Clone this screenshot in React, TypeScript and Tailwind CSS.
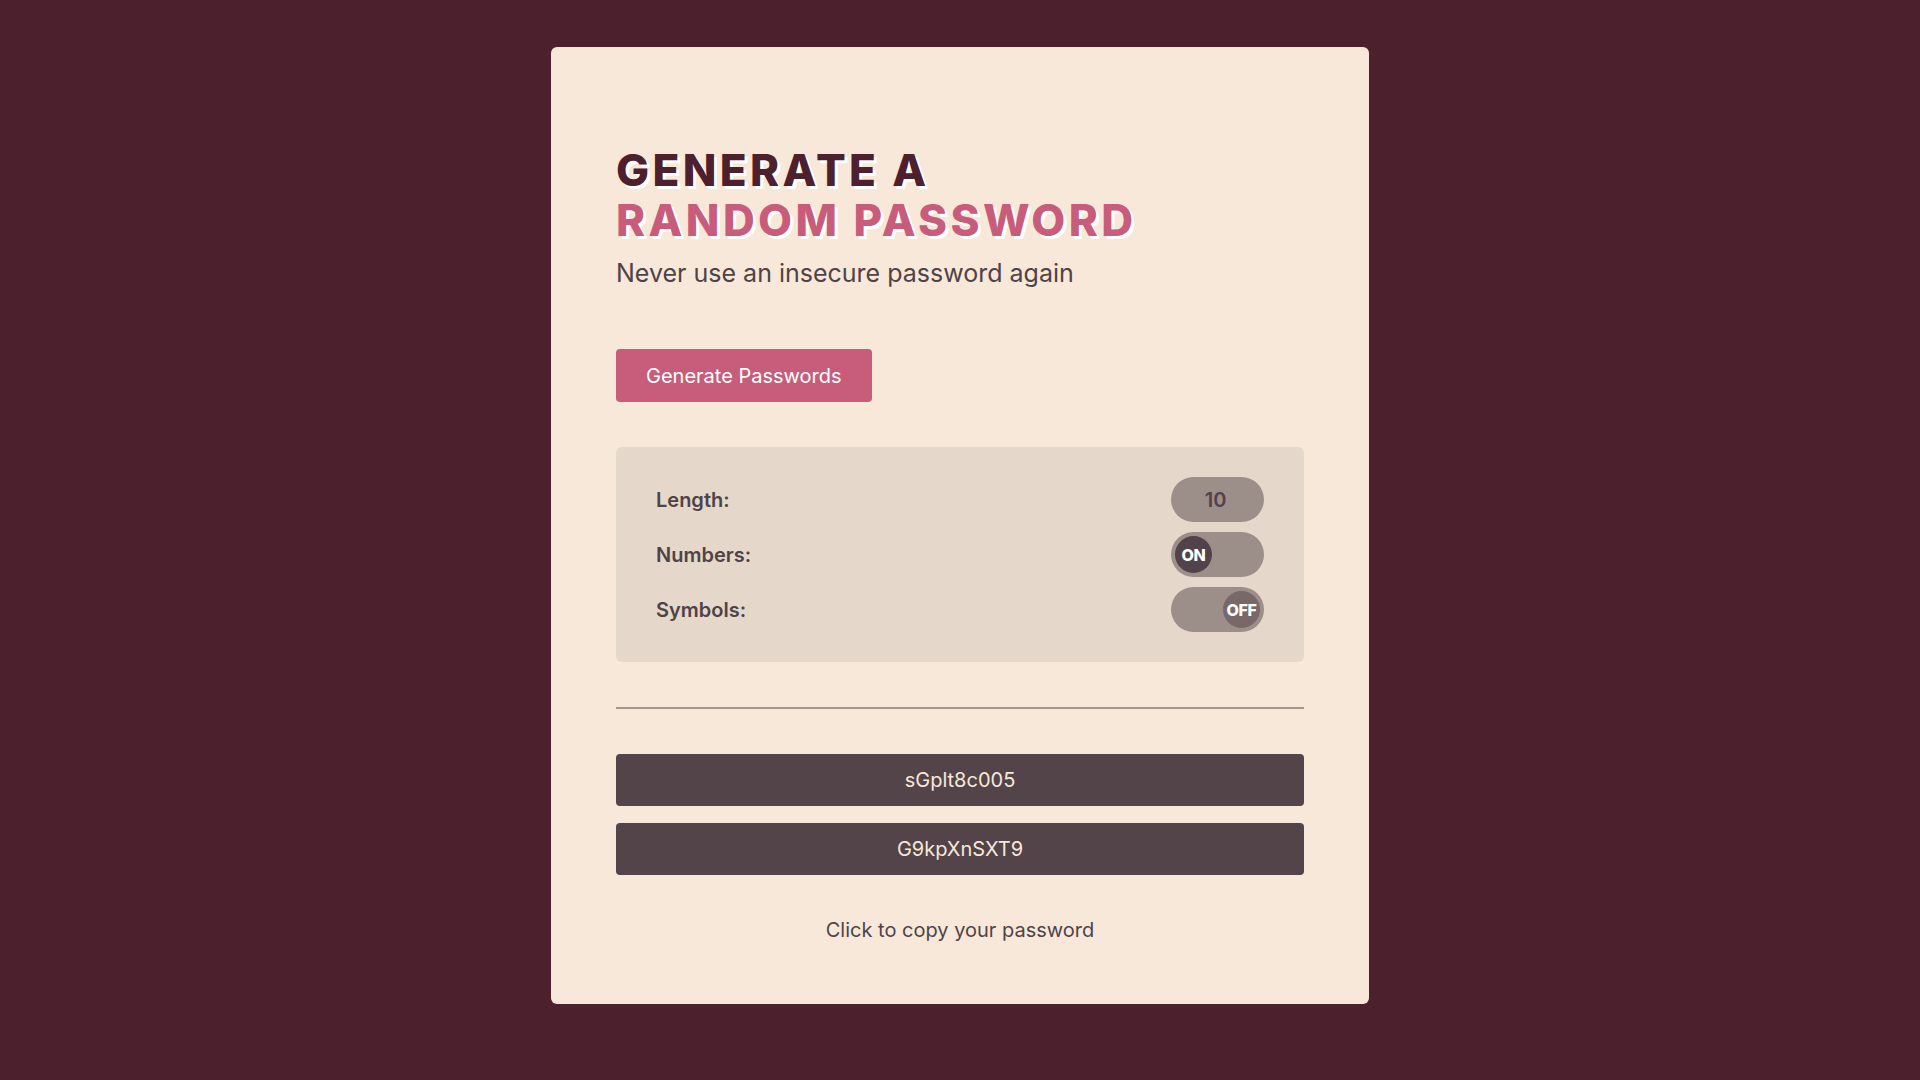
import { useState } from "react";

function Toggle({ on }: { on: boolean }) {
  return (
    <div
      className={`w-[93px] h-[45px] rounded-full bg-[#9c8e88] flex items-center px-[4px] ${
        on ? "justify-start" : "justify-end"
      }`}
    >
      <div
        className={`w-[37px] h-[37px] rounded-full flex items-center justify-center text-[16px] font-extrabold text-white tracking-tight ${
          on ? "bg-[#524249]" : "bg-[#786868]"
        }`}
      >
        {on ? "ON" : "OFF"}
      </div>
    </div>
  );
}

function App() {
  const [passwords] = useState(["sGplt8c005", "G9kpXnSXT9"]);
  return (
    <div className="min-h-screen bg-[#4d202e] font-['Inter',sans-serif] flex justify-center pt-[47px]">
      <div className="w-[818px] h-[957px] bg-[#f8e8da] rounded-[6px] px-[65px] pt-[98px] text-[#4f4347]">
        <h1 className="text-[44px] leading-[50px] font-extrabold uppercase tracking-[3.4px] [text-shadow:3px_3px_0_#ffffff]">
          <span className="block text-[#4d202e]">Generate a</span>
          <span className="block text-[#c75d7b]">Random Password</span>
        </h1>
        <p className="mt-[12px] text-[25px] leading-[32px] text-[#4f4347]">
          Never use an insecure password again
        </p>
        <button className="mt-[60px] h-[53px] px-[30px] bg-[#c75d7b] text-white text-[20px] rounded-[4px]">
          Generate Passwords
        </button>
        <div className="mt-[45px] bg-[#e5d7ca] rounded-[6px] px-[40px] py-[30px] flex flex-col gap-[10px]">
          <div className="flex items-center justify-between">
            <span className="text-[20px] font-semibold">Length:</span>
            <div className="w-[93px] h-[45px] rounded-full bg-[#9c8e88] flex items-center justify-center pr-[4px] text-[20px] font-semibold text-[#524249]">
              10
            </div>
          </div>
          <div className="flex items-center justify-between">
            <span className="text-[20px] font-semibold">Numbers:</span>
            <Toggle on={true} />
          </div>
          <div className="flex items-center justify-between">
            <span className="text-[20px] font-semibold">Symbols:</span>
            <Toggle on={false} />
          </div>
        </div>
        <hr className="mt-[45px] border-t-[2px] border-[#a3958f]" />
        <div className="mt-[45px] flex flex-col gap-[17px]">
          {passwords.map((p) => (
            <div
              key={p}
              className="h-[52px] bg-[#524449] rounded-[4px] flex items-center justify-center text-[20px] text-[#f8e8da] cursor-pointer"
            >
              {p}
            </div>
          ))}
        </div>
        <p className="mt-[41px] text-center text-[20px] leading-[28px]">Click to copy your password</p>
      </div>
    </div>
  );
}

export default App;
